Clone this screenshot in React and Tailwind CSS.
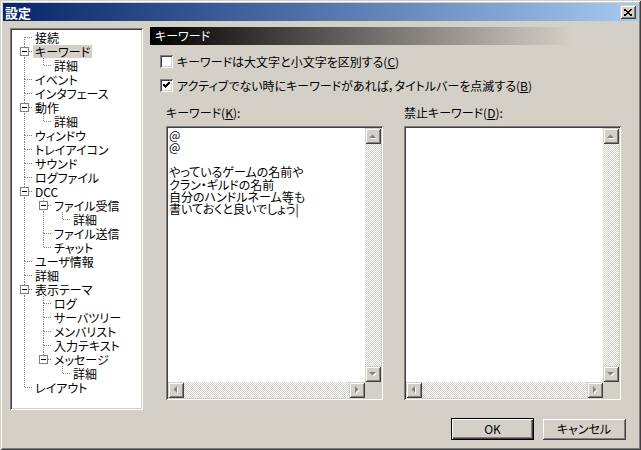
import React from 'react';

const FONT = {
  fontFamily: '"Noto Sans CJK JP", "Noto Sans", sans-serif',
  fontFeatureSettings: '"palt"',
};

const tree = [
  { t: '接続', l: 0 },
  { t: 'キーワード', l: 0, exp: true, sel: true },
  { t: '詳細', l: 1 },
  { t: 'イベント', l: 0 },
  { t: 'インタフェース', l: 0 },
  { t: '動作', l: 0, exp: true },
  { t: '詳細', l: 1 },
  { t: 'ウィンドウ', l: 0 },
  { t: 'トレイアイコン', l: 0 },
  { t: 'サウンド', l: 0 },
  { t: 'ログファイル', l: 0 },
  { t: 'DCC', l: 0, exp: true },
  { t: 'ファイル受信', l: 1, exp: true },
  { t: '詳細', l: 2 },
  { t: 'ファイル送信', l: 1 },
  { t: 'チャット', l: 1 },
  { t: 'ユーザ情報', l: 0 },
  { t: '詳細', l: 0 },
  { t: '表示テーマ', l: 0, exp: true },
  { t: 'ログ', l: 1 },
  { t: 'サーバツリー', l: 1 },
  { t: 'メンバリスト', l: 1 },
  { t: '入力テキスト', l: 1 },
  { t: 'メッセージ', l: 1, exp: true },
  { t: '詳細', l: 2 },
  { t: 'レイアウト', l: 0 },
];

// is there a later sibling at depth d before the branch closes
const hasNextAt = (i, d) => {
  for (let j = i + 1; j < tree.length; j++) {
    if (tree[j].l < d) return false;
    if (tree[j].l === d) return true;
  }
  return false;
};

const DOT = { stroke: '#808080', strokeDasharray: '1 1', shapeRendering: 'crispEdges' };

const GuideCell = ({ full }) => (
  <svg width="19" height="14" className="shrink-0">
    {full && <line x1="12.5" y1="0" x2="12.5" y2="14" {...DOT} />}
  </svg>
);

const OwnCell = ({ top, bottom, exp }) => (
  <svg width="21" height="14" className="shrink-0">
    {top && <line x1="12.5" y1="0" x2="12.5" y2="7" {...DOT} />}
    {bottom && <line x1="12.5" y1="7" x2="12.5" y2="14" {...DOT} />}
    <line x1="13" y1="7.5" x2="21" y2="7.5" {...DOT} />
    {exp && (
      <g shapeRendering="crispEdges">
        <rect x="8.5" y="3.5" width="8" height="8" fill="#fff" stroke="#808080" />
        <line x1="10" y1="7.5" x2="15" y2="7.5" stroke="#000" />
      </g>
    )}
  </svg>
);

const TreeRow = ({ item, i }) => {
  const guides = [];
  for (let d = 0; d < item.l; d++) guides.push(<GuideCell key={d} full={hasNextAt(i, d)} />);
  return (
    <div className="flex h-[14px] items-center">
      {guides}
      <OwnCell top={i > 0} bottom={hasNextAt(i, item.l)} exp={item.exp} />
      <span
        className={
          'px-[2px] text-[12px] leading-[13px] text-black whitespace-nowrap ' +
          (item.sel ? 'bg-[#d4d0c8]' : '')
        }
      >
        {item.t}
      </span>
    </div>
  );
};

const sunken =
  'shadow-[inset_1px_1px_#808080,inset_-1px_-1px_#ffffff,inset_2px_2px_#404040,inset_-2px_-2px_#d4d0c8]';
const raised =
  'shadow-[inset_1px_1px_#d4d0c8,inset_-1px_-1px_#404040,inset_2px_2px_#ffffff,inset_-2px_-2px_#808080]';
const checker =
  'bg-[repeating-conic-gradient(#ffffff_0%_25%,#d4d0c8_0%_50%)] bg-[length:2px_2px]';

const arrows = {
  up: '4,10 11,10 7.5,6.5',
  down: '4,6 11,6 7.5,9.5',
  left: '9,4 9,11 5.5,7.5',
  right: '6,4 6,11 9.5,7.5',
};

const ScrollBtn = ({ dir }) => (
  <div className={'w-[16px] h-[16px] shrink-0 bg-[#d4d0c8] ' + raised}>
    <svg width="16" height="16">
      <polygon points={arrows[dir]} fill="#ffffff" transform="translate(1 1)" />
      <polygon points={arrows[dir]} fill="#808080" />
    </svg>
  </div>
);

const ListBox = ({ lines }) => (
  <div className={'w-[217px] h-[274px] p-[2px] bg-white flex flex-col ' + sunken}>
    <div className="flex flex-1 min-h-0">
      <div className="flex-1 pl-[1px] pt-[1px] text-[12px] leading-[12.4px] text-black whitespace-pre">
        {lines}
      </div>
      <div className={'w-[16px] flex flex-col ' + checker}>
        <ScrollBtn dir="up" />
        <div className="flex-1" />
        <ScrollBtn dir="down" />
      </div>
    </div>
    <div className="flex h-[16px]">
      <div className={'flex-1 flex ' + checker}>
        <ScrollBtn dir="left" />
        <div className="flex-1" />
        <ScrollBtn dir="right" />
      </div>
      <div className="w-[16px] bg-[#d4d0c8]" />
    </div>
  </div>
);

const Checkbox = ({ checked }) => (
  <div className={'w-[13px] h-[13px] shrink-0 bg-white flex items-center justify-center ' + sunken}>
    {checked && (
      <svg width="7" height="7" shapeRendering="crispEdges">
        <polyline points="0.5,2.5 2.5,4.5 6.5,0.5" fill="none" stroke="#000" strokeWidth="2" />
      </svg>
    )}
  </div>
);

export default function App() {
  return (
    <div
      style={FONT}
      className="w-[641px] h-[450px] p-[3px] bg-[#d4d0c8] flex flex-col shadow-[inset_1px_1px_#d4d0c8,inset_-1px_-1px_#404040,inset_2px_2px_#ffffff,inset_-2px_-2px_#808080]"
    >
      {/* title bar */}
      <div className="h-[18px] flex items-center justify-between pl-[2px] pr-[2px] bg-gradient-to-r from-[#0a246a] to-[#a6caf0]">
        <span className="text-[13px] font-bold text-white leading-none">設定</span>
        <div className={'w-[16px] h-[14px] bg-[#d4d0c8] flex items-center justify-center ' + raised}>
          <svg width="8" height="7" shapeRendering="crispEdges">
            <path d="M0 0 L8 7 M8 0 L0 7" stroke="#000" strokeWidth="1.6" />
          </svg>
        </div>
      </div>

      <div className="flex pl-[7px] pt-[6px]">
        {/* tree */}
        <div className={'mt-[1px] w-[133px] h-[382px] p-[2px] bg-white ' + sunken}>
          {tree.map((item, i) => (
            <TreeRow key={i} item={item} i={i} />
          ))}
        </div>

        {/* right panel */}
        <div className="ml-[7px] w-[480px] flex flex-col">
          <div className="h-[18px] flex items-center pl-[5px] bg-[linear-gradient(to_right,#000000,#d4d0c8_88%)] text-[12px] text-white">
            キーワード
          </div>

          <div className="mt-[10px] ml-[10px] flex items-center gap-[4px] h-[13px] text-[12px] text-black">
            <Checkbox />
            <span className="whitespace-nowrap">
              キーワードは大文字と小文字を区別する(<span className="underline">C</span>)
            </span>
          </div>
          <div className="mt-[11px] ml-[10px] flex items-center gap-[4px] h-[13px] text-[12px] text-black">
            <Checkbox checked />
            <span className="whitespace-nowrap">
              アクティブでない時にキーワードがあれば，タイトルバーを点滅する(<span className="underline">B</span>)
            </span>
          </div>

          <div className="mt-[14px] ml-[16px] flex gap-[21px]">
            <div className="flex flex-col">
              <div className="h-[20px] text-[12px] leading-[14px] text-black">
                キーワード(<span className="underline">K</span>):
              </div>
              <ListBox
                lines={'@\n@\n\nやっているゲームの名前や\nクラン・ギルドの名前\n自分のハンドルネーム等も\n書いておくと良いでしょう|'}
              />
            </div>
            <div className="flex flex-col">
              <div className="h-[20px] text-[12px] leading-[14px] text-black">
                禁止キーワード(<span className="underline">D</span>):
              </div>
              <ListBox lines="" />
            </div>
          </div>
        </div>
      </div>

      {/* buttons */}
      <div className="mt-[8px] flex justify-end gap-[8px] pr-[12px]">
        <button className="w-[83px] h-[22px] bg-[#d4d0c8] border border-black text-[12px] text-black shadow-[inset_1px_1px_#ffffff,inset_-1px_-1px_#404040,inset_-2px_-2px_#808080]">
          OK
        </button>
        <button className={'w-[84px] h-[22px] bg-[#d4d0c8] text-[12px] text-black ' + raised}>
          キャンセル
        </button>
      </div>
    </div>
  );
}
